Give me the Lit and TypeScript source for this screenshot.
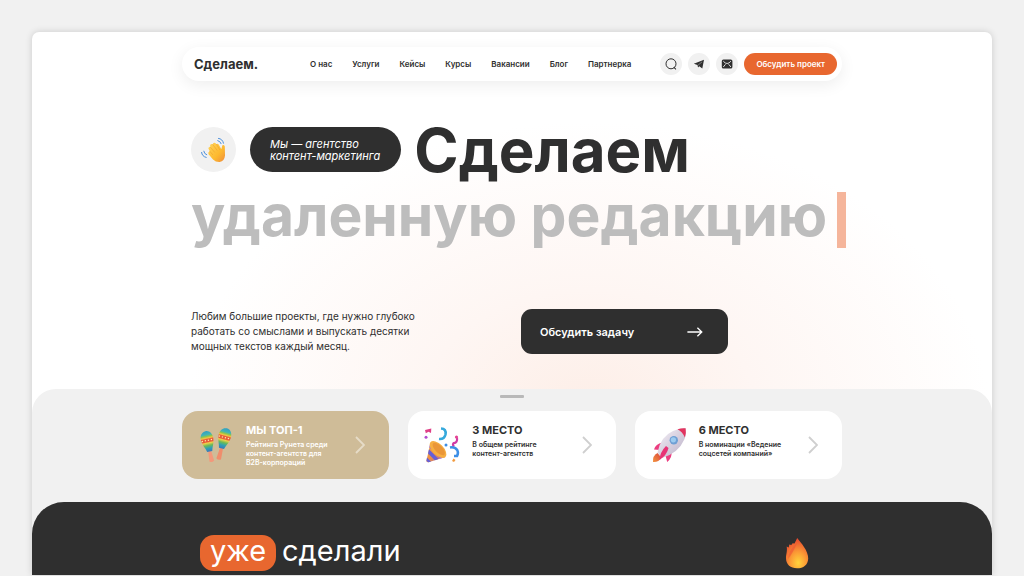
import { LitElement, html, css, svg } from "lit";
import { customElement } from "lit/decorators.js";

const searchIcon = svg`<svg viewBox="0 0 12 12" width="12" height="12" fill="none" stroke="#2f2f2f" stroke-width="1">
  <circle cx="6" cy="5.800" r="5"/><path d="M8.800 9.200 10.900 11.300" stroke-width="1.100"/></svg>`;

const telegramIcon = svg`<svg viewBox="0 0 12 12" width="12" height="12" fill="#2f2f2f">
  <path d="M.8 5.700 11 1.700 9.300 10.400 6.300 8.200 5 9.500 4.500 7Z"/><path d="M4.900 7.300 9 3.900" stroke="#f1f1f1" stroke-width=".4"/></svg>`;

const mailIcon = svg`<svg viewBox="0 0 12 12" width="12" height="12">
  <rect x=".8" y="1.500" width="10.600" height="9" rx="1.600" fill="#2f2f2f"/>
  <path d="M2.300 3.200Q6.100 7.800 9.900 3.200M2.300 9 4.500 6.300M9.900 9 7.700 6.300" fill="none" stroke="#f1f1f1" stroke-width=".9"/></svg>`;

const arrowIcon = svg`<svg viewBox="0 0 16 10" width="16" height="10" fill="none" stroke="#fff" stroke-width="1.300">
  <path d="M.4 5H14.600M10.400.7 14.800 5 10.400 9.300"/></svg>`;

const chevronIcon = svg`<svg viewBox="0 0 10 18" width="10" height="18" fill="none" stroke="currentColor" stroke-width="1.800">
  <path d="M1 1 9 9 1 17"/></svg>`;

const waveIcon = svg`<svg viewBox="0 0 28 28" width="28" height="28">
  <defs><linearGradient id="hand" x1="0" y1="0" x2="1" y2="1"><stop offset="0" stop-color="#ffd55a"/><stop offset=".6" stop-color="#fdb92f"/><stop offset="1" stop-color="#ee8b3c"/></linearGradient></defs>
  <g fill="none" stroke="#4b8fdc" stroke-width="1" stroke-linecap="round">
    <path d="M18.500 2.400q4 .4 5 4.800M17.800 4.600q2.500.6 3.300 3M1.600 16.400q.3 4 4.600 5M3.800 15.200q.3 2.700 2.900 3.600"/></g>
  <path d="M9.800 15.300 8.400 12.500Q8.500 10.400 10.300 11.200L10.100 9.200Q11 7.300 12.600 8.400 13.200 5.900 15.200 7L16.500 8.300Q17.700 7.100 19 8.900L21.300 13.200 22.400 9.300Q24.300 8.200 24.800 10.500L25 19.500Q24.500 25.300 19.600 26 15.800 26.200 13 23.400L8.400 18Q7.800 15.800 9.800 15.300Z" fill="url(#hand)"/>
  <path d="M10.300 11.200 14.600 16.200M12.600 8.400 17 14.200M16.500 8.300 19.800 13.800M9.800 15.300 12.600 18.600" fill="none" stroke="#ea9a2d" stroke-width=".5" stroke-linecap="round"/></svg>`;

const maracasIcon = svg`<svg viewBox="0 0 36 36" width="36" height="36">
  <defs><linearGradient id="shell" x1="0" y1="0" x2="0" y2="1">
    <stop offset="0" stop-color="#2e9fc4"/><stop offset=".18" stop-color="#43b5b3"/><stop offset=".26" stop-color="#8fc54a"/><stop offset=".34" stop-color="#f4c542"/><stop offset=".4" stop-color="#e8593a"/><stop offset=".52" stop-color="#e8593a"/><stop offset=".58" stop-color="#f1d04a"/><stop offset=".7" stop-color="#6dbb55"/><stop offset=".84" stop-color="#2f9fb6"/><stop offset="1" stop-color="#3978b9"/></linearGradient></defs>
  <g transform="rotate(15 26 12)">
    <path d="M24.600 20h2.800l1 12.500q-2.400 2-4.800 0Z" fill="#f08d6c"/>
    <path d="M26 1c3.900 0 6.500 3.600 6.300 8.200-.2 5-2.900 8.600-3.700 12.500h-5.200c-.8-3.900-3.500-7.500-3.700-12.500C19.500 4.600 22.100 1 26 1Z" fill="url(#shell)"/>
    <path d="M20.200 10.400h11.600" stroke="#ffe9a8" stroke-width="1.200" stroke-dasharray="1.300 1.800"/></g>
  <g transform="rotate(-12 9.500 14)">
    <path d="M8.100 23h2.800l1 11.500q-2.400 2-4.800 0Z" fill="#f3987b"/>
    <path d="M9.500 4c3.900 0 6.500 3.600 6.300 8.200-.2 5-2.900 8.600-3.700 12.500H6.900C6.100 20.800 3.400 17.200 3.200 12.200 3 7.600 5.600 4 9.500 4Z" fill="url(#shell)"/>
    <path d="M3.700 13.400h11.600" stroke="#ffe9a8" stroke-width="1.200" stroke-dasharray="1.300 1.800"/></g></svg>`;

const partyIcon = svg`<svg viewBox="0 0 36 36" width="36" height="36">
  <defs><linearGradient id="cone" x1="0" y1="0" x2="1" y2="1"><stop offset="0" stop-color="#f8ad3c"/><stop offset=".5" stop-color="#ec8e48"/><stop offset="1" stop-color="#8a57d3"/></linearGradient></defs>
  <path d="M6.500 15.500 2.400 34Q2.500 35.500 4.500 35.300L21.500 30Z" fill="url(#cone)"/>
  <path d="M5 22.200 14.500 32 10.800 33.300 4 26.500ZM3 30.500 7 34.700 4.300 35.300 2.400 34Z" fill="#6660d8"/>
  <path d="M5.900 18 18.500 31l-2.200.6L5.300 20.500Z" fill="#9a6bd9"/>
  <ellipse cx="14" cy="22.500" rx="10.500" ry="5.500" transform="rotate(45 14 22.500)" fill="#f6ae42"/>
  <ellipse cx="14.800" cy="22" rx="8" ry="3.600" transform="rotate(45 14.800 22)" fill="#ea9638"/>
  <path d="M17 1.500q5.500.2 4.500 6-1.200 5-6.500 4.500" fill="none" stroke="#35a9dc" stroke-width="2.600"/>
  <path d="M33 11q.8 4.500-3.500 5.200-1.200 1.500.5 3.500" fill="none" stroke="#d13aa5" stroke-width="2.200"/>
  <path d="M26 20.500q4.500-1 7.200 2.500 1.500 3-.2 6h-3" fill="none" stroke="#3d8fe6" stroke-width="2.600"/>
  <path d="M1 3 7.300 1.500 7 6 4.500 4.700 1.800 6.200Z" fill="#df3f87"/>
  <circle cx="2" cy="10.300" r="1.500" fill="#b04bd0"/><circle cx="32.500" cy="10" r="1.600" fill="#e54392"/><circle cx="22" cy="18" r="1.500" fill="#3d8fe6"/>
  <path d="m28 34 1.500-2.500 2 1.500-1.500 2Z" fill="#f29b3f"/></svg>`;

const rocketIcon = svg`<svg viewBox="0 0 36 36" width="36" height="36">
  <defs><linearGradient id="hull" x1="0" y1="0" x2="1" y2="1"><stop offset="0" stop-color="#f6f2f8"/><stop offset="1" stop-color="#b9aec6"/></linearGradient>
  <linearGradient id="flame" x1="1" y1="0" x2="0" y2="1"><stop offset="0" stop-color="#d9433a"/><stop offset="1" stop-color="#f39440"/></linearGradient></defs>
  <path d="M6.500 26Q1.500 28.500 2 35 7.500 35.500 10.500 30.500Z" fill="url(#flame)"/>
  <path d="M11.500 15.500Q4.500 17 3 22.500L9 23ZM20.500 24.500Q21.500 30.500 16.200 35L14.500 28.500Z" fill="#ec3d80"/>
  <path d="M6.500 25.500Q9.500 9.500 22 4 29 .8 34.600 1.300 35.800 7 33.300 12.500 27.500 26 11 31Z" fill="url(#hull)"/>
  <path d="M26.500 2.200Q31 .8 34.600 1.300 35.400 6 33.900 10.500 31.500 4.800 26.500 2.200Z" fill="#e2345f"/>
  <path d="M15 19 17.500 21Q16 28 8.500 33 9 25 15 19Z" fill="#e73375"/>
  <circle cx="22.800" cy="13.200" r="4.200" fill="#6f9fd4"/><circle cx="22.400" cy="12.800" r="2.600" fill="#9ccbf0"/></svg>`;

const fireIcon = svg`<svg viewBox="0 0 24 32" width="24" height="32">
  <defs><radialGradient id="fire" cx=".55" cy=".82" r=".8"><stop offset="0" stop-color="#ffd43c"/><stop offset=".45" stop-color="#fb9a35"/><stop offset="1" stop-color="#e9482f"/></radialGradient></defs>
  <path d="M12.200 1C16 6 23.300 13.500 23.200 21.500 23 28 18.500 31.300 12 31.300 5.500 31.300 1.200 27.500 1 21.500.8 17 2.500 15 1.700 9.500L3.700 10.500 4.300 7.500 6.300 8 7.600 6.200 9.500 6.500Z" fill="url(#fire)"/>
  <path d="M12 6Q3.500 13 3 22 8 16 12 6Z" fill="#ee5535" opacity=".6"/></svg>`;

const navItems = ["О нас", "Услуги", "Кейсы", "Курсы", "Вакансии", "Блог", "Партнерка"];

const awards = [
  { icon: maracasIcon, title: "МЫ ТОП-1", lines: ["Рейтинга Рунета среди", "контент-агентств для", "B2B-корпораций"], gold: true },
  { icon: partyIcon, title: "3 МЕСТО", lines: ["В общем рейтинге", "контент-агентств"], gold: false },
  { icon: rocketIcon, title: "6 МЕСТО", lines: ["В номинации «Ведение", "соцсетей компаний»"], gold: false },
];

@customElement("app-root")
export class AppRoot extends LitElement {
  static styles = css`
    :host {
      display: flex;
      box-sizing: border-box;
      height: 100vh;
      padding: 32px 32px 1px;
      overflow: hidden;
      background: #f1f1f1;
      color: #2f2f2f;
      font-family: Inter, "Liberation Sans", sans-serif;
    }
    * { box-sizing: border-box; margin: 0; }
    svg { display: block; flex: none; }
    a { color: inherit; text-decoration: none; }
    button { font: inherit; border: 0; padding: 0; cursor: pointer; }
    .window {
      flex: 1;
      min-width: 0;
      display: flex;
      flex-direction: column;
      overflow: hidden;
      border-radius: 7px 7px 0 0;
      background: radial-gradient(ellipse 400px 290px at 58% 380px, #fdeee7 0%, #fef6f3 42%, #fff 100%) #fff;
      box-shadow: 0 0 7px rgba(0, 0, 0, 0.16);
    }
    .inner { width: 100%; max-width: 660px; margin: 0 auto; }
    .bar {
      display: flex;
      align-items: center;
      margin-top: 15px;
      padding: 6px 5px 6px 12px;
      border-radius: 17px;
      background: #fff;
      box-shadow: 0 4px 16px rgba(0, 0, 0, 0.07);
    }
    .logo { font-size: 13px; line-height: 16px; font-weight: 700; }
    .nav { display: flex; gap: 20px; margin: 0 29px 0 auto; font-size: 8px; line-height: 10px; font-weight: 600; }
    .tools { display: flex; align-items: center; gap: 6px; }
    .round {
      display: grid;
      place-items: center;
      width: 22px;
      height: 22px;
      border-radius: 50%;
      background: #f1f1f1;
    }
    .discuss {
      height: 22px;
      padding: 0 12px;
      border-radius: 11px;
      background: #e8672f;
      color: #fff;
      font-size: 8px;
      font-weight: 600;
    }
    .hero { padding: 46px 0 35px 9px; }
    .headline { font-size: 60px; line-height: 58px; font-weight: 700; white-space: nowrap; }
    .first { display: flex; align-items: center; height: 45px; }
    .hello {
      display: grid;
      place-items: center;
      width: 45px;
      height: 45px;
      border-radius: 50%;
      background: #f1f1f1;
    }
    .about {
      display: flex;
      align-items: center;
      height: 45px;
      margin: 0 13px 0 14px;
      padding: 0 21px 0 20px;
      border-radius: 23px;
      background: #2f2f2f;
      color: #fff;
      font-size: 11px;
      line-height: 12px;
      font-weight: 400;
      font-style: italic;
    }
    .second { display: flex; align-items: flex-start; justify-content: space-between; width: 655px; max-width: 100%; margin-top: 15px; color: #bdbdbd; font-size: 57px; }
    .caret { flex: none; width: 9px; height: 56px; margin-top: 5px; background: #f5b59b; }
    .offer { display: grid; grid-template-columns: 330px 207px; margin-top: 61px; }
    .second { margin-right: -4px; max-width: none; }
    .lead { font-size: 10px; line-height: 15px; }
    .task {
      display: flex;
      align-items: center;
      justify-content: space-between;
      height: 45px;
      padding: 0 25px 0 19px;
      border-radius: 11px;
      background: #2f2f2f;
      color: #fff;
      font-size: 11px;
      font-weight: 600;
    }
    .sheet { flex: 1; display: flex; flex-direction: column; padding-top: 6px; border-radius: 24px 24px 0 0; background: #f1f1f1; }
    .handle { width: 24px; height: 3px; margin: 0 auto 13px; border-radius: 1px; background: #b9b9b9; }
    .cards { display: grid; grid-template-columns: repeat(3, 1fr); gap: 19px; }
    .card {
      display: flex;
      align-items: center;
      height: 68px;
      padding: 0 24px 0 16px;
      border-radius: 16px;
      background: #fff;
      color: #2f2f2f;
    }
    .gold { background: #cfbc98; color: #fff; }
    .text { flex: 1; align-self: flex-start; margin-left: 12px; padding-top: 11px; white-space: nowrap; }
    .title { font-size: 11px; line-height: 16px; font-weight: 700; }
    .note { margin-top: 2px; font-size: 7px; line-height: 9px; font-weight: 600; }
    .chevron { color: #cfcfcf; }
    .gold .chevron { color: #e6dcc8; }
    .done { flex: 1; margin-top: 23px; border-radius: 32px 32px 0 0; background: #2f2f2f; }
    .row { display: flex; justify-content: space-between; align-items: center; padding: 33px 33px 0 18px; }
    .made { display: flex; gap: 6px; color: #fff; font-size: 29px; line-height: 32px; font-weight: 400; }
    .tag { height: 36px; padding: 0 10px; border-radius: 14px; background: #e8672f; }
  `;

  render() {
    return html`
      <div class="window">
        <header class="bar inner">
          <a class="logo" href="#">Сделаем.</a>
          <nav class="nav">${navItems.map((item) => html`<a href="#">${item}</a>`)}</nav>
          <div class="tools">
            <button class="round" aria-label="Поиск">${searchIcon}</button>
            <a class="round" href="#" aria-label="Telegram">${telegramIcon}</a>
            <a class="round" href="#" aria-label="Почта">${mailIcon}</a>
            <button class="discuss">Обсудить проект</button>
          </div>
        </header>
        <section class="hero inner">
          <h1 class="headline">
            <div class="first">
              <span class="hello">${waveIcon}</span>
              <span class="about">Мы — агентство<br />контент-маркетинга</span>
              <span>Сделаем</span>
            </div>
            <div class="second"><span>удаленную редакцию</span><span class="caret"></span></div>
          </h1>
          <div class="offer">
            <p class="lead">Любим большие проекты, где нужно глубоко<br />работать со смыслами и выпускать десятки<br />мощных текстов каждый месяц.</p>
            <button class="task"><span>Обсудить задачу</span>${arrowIcon}</button>
          </div>
        </section>
        <section class="sheet">
          <div class="handle"></div>
          <div class="cards inner">
            ${awards.map(
              (award) => html`
                <a class="card ${award.gold ? "gold" : ""}" href="#">
                  ${award.icon}
                  <div class="text">
                    <h2 class="title">${award.title}</h2>
                    <p class="note">${award.lines.map((line, i) => html`${i ? html`<br />` : ""}${line}`)}</p>
                  </div>
                  <span class="chevron">${chevronIcon}</span>
                </a>
              `
            )}
          </div>
          <div class="done">
            <div class="row inner">
              <h2 class="made"><span class="tag">уже</span><span>сделали</span></h2>
              ${fireIcon}
            </div>
          </div>
        </section>
      </div>
    `;
  }
}
